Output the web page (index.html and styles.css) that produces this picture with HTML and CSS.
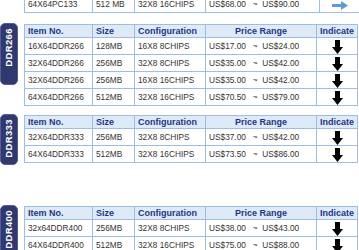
FILE: index.html
```html
<!DOCTYPE html>
<html>
<head>
<meta charset="utf-8">
<link rel="stylesheet" href="styles.css">
</head>
<body>
<div class="page">
  <section class="group group-first">
    <div class="tab-spacer"></div>
    <table class="prices">
      <tr>
        <td class="c-item">64X64PC133</td>
        <td class="c-size">512 MB</td>
        <td class="c-conf">32X8 16CHIPS</td>
        <td class="c-price">US$68.00&nbsp;&nbsp;&nbsp;~&nbsp;&nbsp;US$90.00</td>
        <td class="c-ind"><svg class="arrow-right" viewBox="0 0 16 9"><path d="M0 3h9V0l7 4.5-7 4.5V6H0z" fill="#5b9bd8"/></svg></td>
      </tr>
    </table>
  </section>

  <section class="group group-266">
    <div class="tab tab-266"><span>DDR266</span></div>
    <table class="prices">
      <tr class="head"><th class="c-item">Item No.</th><th class="c-size">Size</th><th class="c-conf">Configuration</th><th class="c-price">Price Range</th><th class="c-ind">Indicate</th></tr>
      <tr><td>16X64DDR266</td><td>128MB</td><td>16X8 8CHIPS</td><td>US$17.00&nbsp;&nbsp;&nbsp;~&nbsp;&nbsp;US$24.00</td><td class="c-ind"><svg class="arrow-down" viewBox="0 0 11 14"><path d="M3 0h5v7h3l-5.5 7L0 7h3z" fill="#000"/></svg></td></tr>
      <tr><td>32X64DDR266</td><td>256MB</td><td>32X8 8CHIPS</td><td>US$35.00&nbsp;&nbsp;&nbsp;~&nbsp;&nbsp;US$42.00</td><td class="c-ind"><svg class="arrow-down" viewBox="0 0 11 14"><path d="M3 0h5v7h3l-5.5 7L0 7h3z" fill="#000"/></svg></td></tr>
      <tr><td>32X64DDR266</td><td>256MB</td><td>16X8 16CHIPS</td><td>US$35.00&nbsp;&nbsp;&nbsp;~&nbsp;&nbsp;US$42.00</td><td class="c-ind"><svg class="arrow-down" viewBox="0 0 11 14"><path d="M3 0h5v7h3l-5.5 7L0 7h3z" fill="#000"/></svg></td></tr>
      <tr><td>64X64DDR266</td><td>512MB</td><td>32X8 16CHIPS</td><td>US$70.50&nbsp;&nbsp;&nbsp;~&nbsp;&nbsp;US$79.00</td><td class="c-ind"><svg class="arrow-down" viewBox="0 0 11 14"><path d="M3 0h5v7h3l-5.5 7L0 7h3z" fill="#000"/></svg></td></tr>
    </table>
  </section>

  <section class="group group-333">
    <div class="tab tab-333"><span>DDR333</span></div>
    <table class="prices">
      <tr class="head"><th class="c-item">Item No.</th><th class="c-size">Size</th><th class="c-conf">Configuration</th><th class="c-price">Price Range</th><th class="c-ind">Indicate</th></tr>
      <tr><td>32X64DDR333</td><td>256MB</td><td>32X8 8CHIPS</td><td>US$37.00&nbsp;&nbsp;&nbsp;~&nbsp;&nbsp;US$42.00</td><td class="c-ind"><svg class="arrow-down" viewBox="0 0 11 14"><path d="M3 0h5v7h3l-5.5 7L0 7h3z" fill="#000"/></svg></td></tr>
      <tr><td>64X64DDR333</td><td>512MB</td><td>32X8 16CHIPS</td><td>US$73.50&nbsp;&nbsp;&nbsp;~&nbsp;&nbsp;US$86.00</td><td class="c-ind"><svg class="arrow-down" viewBox="0 0 11 14"><path d="M3 0h5v7h3l-5.5 7L0 7h3z" fill="#000"/></svg></td></tr>
    </table>
  </section>

  <section class="group group-400">
    <div class="tab tab-400"><span>DDR400</span></div>
    <table class="prices">
      <tr class="head"><th class="c-item">Item No.</th><th class="c-size">Size</th><th class="c-conf">Configuration</th><th class="c-price">Price Range</th><th class="c-ind">Indicate</th></tr>
      <tr><td>32x64DDR400</td><td>256MB</td><td>32X8 8CHIPS</td><td>US$38.00&nbsp;&nbsp;&nbsp;~&nbsp;&nbsp;US$43.00</td><td class="c-ind"><svg class="arrow-down" viewBox="0 0 11 14"><path d="M3 0h5v7h3l-5.5 7L0 7h3z" fill="#000"/></svg></td></tr>
      <tr><td>64X64DDR400</td><td>512MB</td><td>32X8 16CHIPS</td><td>US$75.00&nbsp;&nbsp;&nbsp;~&nbsp;&nbsp;US$88.00</td><td class="c-ind"><svg class="arrow-down" viewBox="0 0 11 14"><path d="M3 0h5v7h3l-5.5 7L0 7h3z" fill="#000"/></svg></td></tr>
    </table>
  </section>
</div>
</body>
</html>
```
FILE: styles.css
```css
html, body {
  margin: 0;
  padding: 0;
  background: #ffffff;
  overflow: hidden;
}
body {
  font-family: "Liberation Sans", Arial, sans-serif;
  color: #333333;
}
.page {
  display: flex;
  flex-direction: column;
  margin-top: -5px;
}
.group {
  display: flex;
  align-items: flex-start;
  gap: 6px;
}
.group-first { margin-bottom: 11px; }
.group-266 { margin-bottom: 9px; }
.group-333 { margin-bottom: 41px; }

.tab-spacer {
  width: 18px;
  flex: none;
}
.tab {
  width: 18px;
  flex: none;
  box-sizing: border-box;
  background: #303870;
  border: 1px solid #565f92;
  border-radius: 5px;
  display: flex;
  flex-direction: column;
  align-items: center;
  justify-content: flex-start;
  padding-top: 4px;
  margin-top: -1px;
}
.tab span {
  writing-mode: vertical-rl;
  transform: rotate(180deg);
  color: #ffffff;
  font-weight: bold;
  font-size: 9.5px;
  letter-spacing: 0.4px;
  line-height: 14px;
}
.tab-266 { height: 62px; }
.tab-333 { height: 51px; }
.tab-400 { height: 60px; }

.prices {
  width: 333px;
  border-collapse: collapse;
  border: 1px solid #88add6;
  table-layout: fixed;
  font-size: 8.3px;
}
.prices td, .prices th {
  border: 1px solid #9dbde2;
  height: 16px;
  padding: 0 0 0 3px;
  white-space: nowrap;
  text-align: left;
  vertical-align: middle;
  line-height: 10px;
}
.prices .head th {
  background: #dfeaf8;
  color: #1e3584;
  font-size: 9px;
  font-weight: bold;
  height: 12px;
}
.prices .head th.c-price,
.prices .head th.c-ind {
  text-align: center;
  padding: 0;
}
.c-item { width: 64px; }
.c-size { width: 38px; }
.c-conf { width: 67px; }
.c-price { width: 110px; }
.c-ind { width: 40px; }
.prices td.c-ind {
  text-align: center;
  padding: 0;
}
.arrow-down {
  width: 11px;
  height: 14px;
  display: block;
  margin: 1px auto 0;
}
.arrow-right {
  width: 16px;
  height: 9px;
  display: block;
  margin: 3px auto 0;
}
```
